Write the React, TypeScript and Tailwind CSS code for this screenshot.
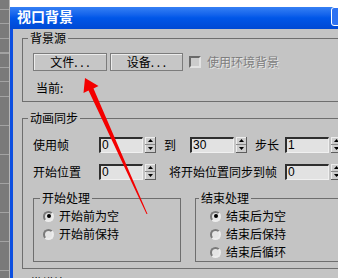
import React from "react";

function Btn({ w, className = "", children }: { w: string; className?: string; children: React.ReactNode }) {
  return (
    <div
      className={`flex h-[18px] ${w} items-center justify-center border border-[#7c7c7c] bg-[#c6c6c6] shadow-[inset_1px_1px_0_#ececec] ${className}`}
    >
      {children}
    </div>
  );
}

function Spinner() {
  return (
    <div className="ml-[2px] flex h-[16px] w-[11px] flex-col border-r border-b border-[#5e5e5e] bg-[#cdcdcd] shadow-[inset_1px_1px_0_#ededed]">
      <div className="flex flex-1 items-center justify-center border-b border-[#8a8a8a]">
        <svg width="5" height="3" viewBox="0 0 5 3">
          <path d="M2.5 0L5 3H0z" fill="#000" />
        </svg>
      </div>
      <div className="flex flex-1 items-center justify-center">
        <svg width="5" height="3" viewBox="0 0 5 3">
          <path d="M0 0H5L2.5 3z" fill="#000" />
        </svg>
      </div>
    </div>
  );
}

function NumField({ value, className = "" }: { value: string; className?: string }) {
  return (
    <div className={`flex items-center ${className}`}>
      <div className="h-[16px] w-[44px] border-t-2 border-l-2 border-r border-b border-t-[#2e2e2e] border-l-[#2e2e2e] border-r-[#f0f0f0] border-b-[#f0f0f0] bg-[#e2e2e2] pl-[1px] font-['Liberation_Sans',sans-serif] text-[12px] leading-[13px]">
        {value}
      </div>
      <Spinner />
    </div>
  );
}

function Radio({ checked, label }: { checked?: boolean; label: string }) {
  return (
    <div className="flex h-[18px] items-center gap-[5px]">
      <div className="flex h-[11px] w-[11px] items-center justify-center rounded-full border-2 border-t-[#7a7a7a] border-l-[#7a7a7a] border-r-[#ececec] border-b-[#ececec] bg-[#e4e4e4]">
        {checked && <div className="h-[4px] w-[4px] rounded-full bg-black" />}
      </div>
      <span>{label}</span>
    </div>
  );
}

export default function App() {
  return (
    <div className="relative flex h-[278px] w-[338px] overflow-hidden bg-white font-['Noto_Sans_CJK_SC','Liberation_Sans',sans-serif] text-[12px] leading-[14px] text-black">
      {/* desktop strip on the left */}
      <div className="h-full w-[9px] shrink-0 bg-[#7a7a7a] bg-[image:repeating-linear-gradient(to_bottom,#7a7a7a_0px,#7a7a7a_9px,#a2a2a2_9px,#a2a2a2_10px,#7a7a7a_10px,#7a7a7a_14.5px)]" />
      <div className="h-full w-px shrink-0 bg-[#b6b6b6]" />

      <div className="flex min-w-0 flex-1 flex-col">
        <div className="h-[7px] shrink-0 bg-white" />
        {/* title bar */}
        <div className="flex h-[22px] shrink-0 items-start bg-gradient-to-b from-[#3580f4] via-[#0056e8] to-[#0049d4] pl-[7px]">
          <span className="mt-[1px] text-[14px] font-bold leading-[16px] text-white">视口背景</span>
          <div className="mt-[0px] mr-[-14px] ml-auto h-[19px] w-[21px] rounded-[3px] border border-white bg-[#2e72f2]" />
        </div>

        {/* dialog body */}
        <div className="flex-1 border-l-[3px] border-[#0c4fe0] bg-[#c4c4c4] pt-[2px] pl-[9px]">
          <fieldset className="w-[330px] border border-[#6e6e6e]">
            <legend className="ml-[5px] px-[2px] leading-[14px]">背景源</legend>
            <div className="pt-[8px] pb-[6px] pl-[10px]">
              <div className="flex h-[18px] items-center">
                <Btn w="w-[74px]">文件. . .</Btn>
                <Btn w="w-[73px]" className="ml-[3px]">
                  设备. . .
                </Btn>
                <div className="ml-[6px] h-[12px] w-[12px] border-2 border-t-[#6a6a6a] border-l-[#6a6a6a] border-r-[#e2e2e2] border-b-[#e2e2e2] bg-[#cccccc]" />
                <span className="ml-[6px] text-[#7e7e7e] [text-shadow:1px_1px_0_#e6e6e6]">使用环境背景</span>
              </div>
              <div className="mt-[10px] ml-[3px]">当前:</div>
            </div>
          </fieldset>

          <fieldset className="mt-[9px] w-[330px] border border-[#6e6e6e]">
            <legend className="ml-[5px] px-[2px] leading-[14px]">动画同步</legend>
            <div className="pt-[12px] pb-[6px] pl-[10px]">
              <div className="flex h-[16px] items-center">
                <span className="w-[66px]">使用帧</span>
                <NumField value="0" />
                <span className="ml-[8px]">到</span>
                <NumField value="30" className="ml-[14px]" />
                <span className="ml-[8px]">步长</span>
                <NumField value="1" className="ml-[6px]" />
              </div>
              <div className="mt-[11px] flex h-[16px] items-center">
                <span className="w-[66px]">开始位置</span>
                <NumField value="0" />
                <span className="ml-[13px]">将开始位置同步到帧</span>
                <NumField value="0" className="ml-[8px]" />
              </div>

              <div className="mt-[11px] flex gap-[14px]">
                <fieldset className="w-[148px] border border-[#6e6e6e]">
                  <legend className="ml-[6px] px-[2px] leading-[14px]">开始处理</legend>
                  <div className="pt-[2px] pl-[9px]">
                    <Radio checked label="开始前为空" />
                    <Radio label="开始前保持" />
                  </div>
                </fieldset>
                <fieldset className="w-[150px] border border-[#6e6e6e]">
                  <legend className="ml-[3px] px-[2px] leading-[14px]">结束处理</legend>
                  <div className="pt-[2px] pl-[14px]">
                    <Radio checked label="结束后为空" />
                    <Radio label="结束后保持" />
                    <Radio label="结束后循环" />
                  </div>
                </fieldset>
              </div>
            </div>
          </fieldset>

          <fieldset className="mt-[7px] w-[330px] border border-[#6e6e6e]">
            <legend className="ml-[5px] px-[2px] leading-[14px]">纵横比</legend>
            <div className="h-[40px]" />
          </fieldset>
        </div>
      </div>

      {/* red annotation arrow */}
      <svg className="pointer-events-none absolute top-0 left-0" width="338" height="278" viewBox="0 0 338 278">
        <polygon
          points="85,78 98.5,86 93.5,88.5 147.5,214 146.5,214 88.5,90.5 83.5,93"
          fill="#f40000"
        />
      </svg>
    </div>
  );
}
